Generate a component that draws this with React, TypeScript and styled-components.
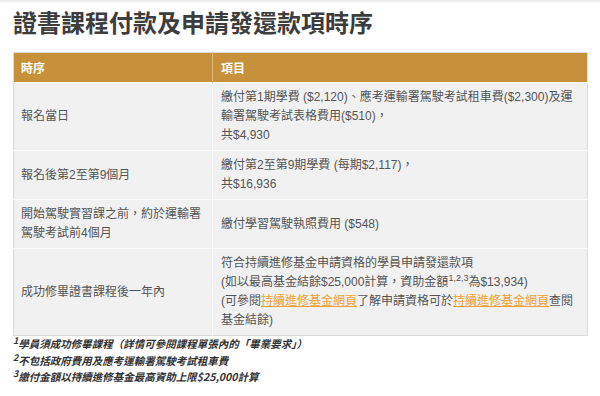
import styled, { createGlobalStyle } from "styled-components"

const GlobalStyle = createGlobalStyle`
  html, body {
    margin: 0;
    padding: 0;
    background: #ffffff;
  }
  body {
    font-family: "Liberation Sans", "Noto Sans CJK TC", sans-serif;
  }
`

const TopShade = styled.div`
  height: 4px;
  background: linear-gradient(#ececec, #ffffff);
`

const Page = styled.div`
  padding: 0 12px 0 13px;
`

const Title = styled.h2`
  margin: 1px 0 13px;
  font-family: "Noto Sans CJK TC", sans-serif;
  font-size: 24px;
  line-height: 34px;
  font-weight: 700;
  color: #3d3d3d;
`

const Table = styled.table`
  width: 575px;
  border-collapse: collapse;
  table-layout: fixed;
  border: 1px solid #dcdcdc;
  font-size: 12px;
  line-height: 19px;
`

const HeadCell = styled.th<{ $w?: number }>`
  box-sizing: border-box;
  width: ${(p) => (p.$w ? `${p.$w}px` : "auto")};
  height: 30px;
  padding: 0 7px;
  background: #c6913a;
  color: #ffffff;
  font-family: "Noto Sans CJK TC", sans-serif;
  font-weight: 700;
  font-size: 12px;
  text-align: left;
  border-right: 1px solid #dcb77a;
  &:last-child {
    border-right: none;
    padding-left: 8px;
  }
`

const Cell = styled.td`
  padding: 5px 7px;
  background: #f1f1f1;
  color: #555555;
  vertical-align: middle;
  border-top: 1px solid #fbfbfb;
  border-right: 1px solid #fbfbfb;
  &:last-child {
    border-right: none;
    padding: 5px 4px 5px 8px;
  }
`

const Link = styled.a`
  color: #f0a132;
  text-decoration: underline;
`

const Sup = styled.sup`
  font-size: 9px;
  line-height: 0;
`

const Notes = styled.div`
  margin-top: 0;
  font-family: "Noto Sans CJK TC", sans-serif;
  font-size: 10.5px;
  line-height: 16.5px;
  font-weight: 700;
  font-style: italic;
  color: #333333;
`

const Note = styled.div``

const rows: { when: React.ReactNode; what: React.ReactNode }[] = [
  {
    when: "報名當日",
    what: (
      <>
        繳付第1期學費 ($2,120)、應考運輸署駕駛考試租車費($2,300)及運輸署駕駛考試表格費用($510)，
        <br />
        共$4,930
      </>
    ),
  },
  {
    when: "報名後第2至第9個月",
    what: (
      <>
        繳付第2至第9期學費 (每期$2,117)，
        <br />
        共$16,936
      </>
    ),
  },
  {
    when: "開始駕駛實習課之前，約於運輸署駕駛考試前4個月",
    what: "繳付學習駕駛執照費用 ($548)",
  },
  {
    when: "成功修畢證書課程後一年內",
    what: (
      <>
        符合持續進修基金申請資格的學員申請發還款項
        <br />
        (如以最高基金結餘$25,000計算，資助金額<Sup>1,2,3</Sup>為$13,934)
        <br />
        (可參閱<Link>持續進修基金網頁</Link>了解申請資格可於<Link>持續進修基金網頁</Link>查閱基金結餘)
      </>
    ),
  },
]

export default function App() {
  return (
    <>
      <GlobalStyle />
      <TopShade />
      <Page>
        <Title>證書課程付款及申請發還款項時序</Title>
        <Table>
          <thead>
            <tr>
              <HeadCell $w={199}>時序</HeadCell>
              <HeadCell>項目</HeadCell>
            </tr>
          </thead>
          <tbody>
            {rows.map((r, i) => (
              <tr key={i}>
                <Cell>{r.when}</Cell>
                <Cell>{r.what}</Cell>
              </tr>
            ))}
          </tbody>
        </Table>
        <Notes>
          <Note>
            <Sup>1</Sup>學員須成功修畢課程（詳情可參閱課程單張內的「畢業要求」）
          </Note>
          <Note>
            <Sup>2</Sup>不包括政府費用及應考運輸署駕駛考試租車費
          </Note>
          <Note>
            <Sup>3</Sup>繳付金額以持續進修基金最高資助上限$25,000計算
          </Note>
        </Notes>
      </Page>
    </>
  )
}
